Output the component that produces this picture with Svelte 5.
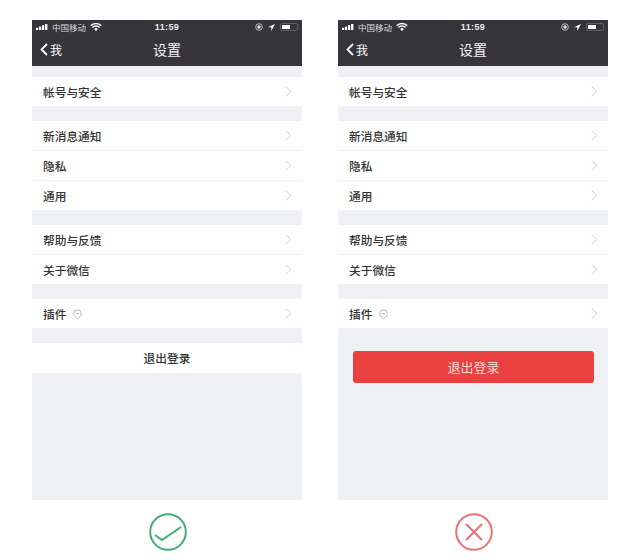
<script lang="ts">
  // Two settings screens side by side: the correct and the wrong logout button.
  const groups = [
    [{ label: '帐号与安全' }],
    [{ label: '新消息通知' }, { label: '隐私' }, { label: '通用' }],
    [{ label: '帮助与反馈' }, { label: '关于微信' }],
    [{ label: '插件', shield: true }],
  ];
  const screens = [{ kind: 'good' }, { kind: 'bad' }];
</script>

<main class="page">
  {#each screens as screen (screen.kind)}
    <section class="col">
      <div class="phone">
        <header class="top">
          <div class="status">
            <div class="status__left">
              <svg class="signal" width="12" height="6" viewBox="0 0 12 6" aria-hidden="true">
                <rect x="0" y="3.8" width="2.2" height="2.2" fill="#fff" />
                <rect x="3" y="2.6" width="2.2" height="3.4" fill="#fff" />
                <rect x="6" y="1.2" width="2.2" height="4.8" fill="#fff" />
                <rect x="9" y="0" width="2.4" height="6" fill="#fff" />
              </svg>
              <span>中国移动</span>
              <svg class="wifi" width="12" height="8" viewBox="0 0 12 8" aria-hidden="true">
                <path d="M0.7 2.7a7.6 7.6 0 0 1 10.6 0M2.4 4.5a5.1 5.1 0 0 1 7.2 0" fill="none" stroke="#fff" stroke-width="1.3" />
                <path d="M4.1 5.9a2.7 2.7 0 0 1 3.8 0L6 7.9z" fill="#fff" />
              </svg>
            </div>
            <span class="status__time">11:59</span>
            <div class="status__right">
              <svg width="8" height="8" viewBox="0 0 8 8" aria-hidden="true">
                <circle cx="4" cy="4" r="3.3" fill="none" stroke="#ccc" stroke-width="0.9" />
                <circle cx="4" cy="4" r="1.7" fill="#e4e4e4" />
              </svg>
              <svg width="7" height="7" viewBox="0 0 7 7" aria-hidden="true">
                <path d="M7 0L0 3.2h3.3V7z" fill="#fff" />
              </svg>
              <div class="battery"><div class="battery__fill" style="width: 55%"></div></div>
            </div>
          </div>
          <div class="nav">
            <div class="nav__back">
              <svg width="8" height="13" viewBox="0 0 8 13" aria-hidden="true">
                <path d="M7 1L1.5 6.5L7 12" fill="none" stroke="#fff" stroke-width="1.8" />
              </svg>
              <span>我</span>
            </div>
            <span class="nav__title">设置</span>
          </div>
        </header>

        <div class="list">
          {#each groups as group}
            <div class="group">
              {#each group as row (row.label)}
                <div class="row">
                  <span class="row__label">{row.label}</span>
                  {#if row.shield}
                    <svg class="row__shield" width="9" height="10" viewBox="0 0 9 10" aria-hidden="true">
                      <path d="M4.5 9.5C2.4 8.4 0.7 6.8 0.7 4.6A3.8 3.8 0 0 1 8.3 4.6C8.3 6.8 6.6 8.4 4.5 9.5z" fill="none" stroke="#a8a8a8" stroke-width="0.8" />
                      <path d="M2.8 4.6h3.4" stroke="#a8a8a8" stroke-width="0.8" />
                    </svg>
                  {/if}
                  <svg class="row__chevron" width="7" height="11" viewBox="0 0 7 11" aria-hidden="true">
                    <path d="M0.7 0.7L6 5.5L0.7 10.3" fill="none" stroke="#d0d0d4" stroke-width="1" />
                  </svg>
                </div>
              {/each}
            </div>
          {/each}

          {#if screen.kind === 'good'}
            <div class="logout">退出登录</div>
          {:else}
            <div class="logout-danger">退出登录</div>
          {/if}
        </div>
      </div>

      <div class="verdict">
        {#if screen.kind === 'good'}
          <svg width="38" height="38" viewBox="0 0 38 38" aria-hidden="true">
            <circle cx="19" cy="19" r="17.8" fill="none" stroke="#3fae74" stroke-width="2" />
            <path d="M6 22L13 27L32 14" fill="none" stroke="#3fae74" stroke-width="2" />
          </svg>
        {:else}
          <svg width="38" height="38" viewBox="0 0 38 38" aria-hidden="true">
            <circle cx="19" cy="19" r="17.8" fill="none" stroke="#ee6f76" stroke-width="2" />
            <path d="M11 11L27 27M27 11L11 27" fill="none" stroke="#ee6f76" stroke-width="2" />
          </svg>
        {/if}
      </div>
    </section>
  {/each}
</main>

<style>
  :global(body) {
    background: #fff;
  }

  .page {
    display: flex;
    gap: 36px;
    height: 560px;
    padding: 20px 0 0 32px;
    box-sizing: border-box;
    font-family: "Noto Sans CJK SC", "Liberation Sans", sans-serif;
  }

  .col {
    display: flex;
    flex-direction: column;
    width: 270px;
  }

  .phone {
    display: flex;
    flex-direction: column;
    height: 480px;
    background: #eff0f4;
  }

  .top {
    height: 46px;
    flex: none;
    background: #35353a;
    color: #fff;
  }

  .status {
    display: grid;
    grid-template-columns: 1fr auto 1fr;
    align-items: center;
    height: 14px;
    padding: 0 4px;
    font-size: 8.5px;
    line-height: 14px;
  }
  .status__left {
    display: flex;
    align-items: center;
    gap: 4px;
    color: #ddd;
  }
  .status__time {
    font-family: "Liberation Sans", sans-serif;
    font-size: 9px;
    font-weight: 700;
    letter-spacing: 0.4px;
    color: #e8e8e8;
  }
  .status__right {
    display: flex;
    align-items: center;
    justify-content: flex-end;
    gap: 5px;
  }

  .battery {
    width: 18px;
    height: 8px;
    padding: 1px;
    box-sizing: border-box;
    border: 1px solid #5e5e62;
    border-radius: 2px;
  }
  .battery__fill {
    height: 100%;
    background: #fff;
  }

  .nav {
    position: relative;
    display: flex;
    align-items: center;
    justify-content: center;
    height: 32px;
  }
  .nav__back {
    position: absolute;
    left: 8px;
    top: 0;
    display: flex;
    align-items: center;
    gap: 2px;
    height: 30px;
    font-size: 12px;
  }
  .nav__title {
    margin-top: -3px;
    font-size: 14px;
    color: #f2f2f2;
  }

  .list {
    display: flex;
    flex-direction: column;
    padding-top: 11px;
    gap: 15px;
  }

  .group {
    display: flex;
    flex-direction: column;
    gap: 1px;
    background: #f1f1f3;
  }

  .row {
    display: flex;
    align-items: center;
    height: 29px;
    padding: 0 10px 0 11px;
    background: #fff;
  }
  .row__label {
    font-size: 11.7px;
    font-weight: 500;
    color: #333;
  }
  .row__shield {
    margin-left: 7px;
  }
  .row__chevron {
    margin-left: auto;
  }

  .logout {
    height: 30px;
    font-size: 11.7px;
    font-weight: 500;
    line-height: 30px;
    text-align: center;
    color: #333;
    background: #fff;
  }

  .logout-danger {
    height: 32px;
    margin: 8px 14px 0 15px;
    font-size: 13px;
    line-height: 32px;
    text-align: center;
    color: #fbd9d9;
    background: #e94040;
    border-radius: 3px;
  }

  .verdict {
    display: flex;
    justify-content: center;
    padding: 13px 0 0 2px;
  }
</style>
